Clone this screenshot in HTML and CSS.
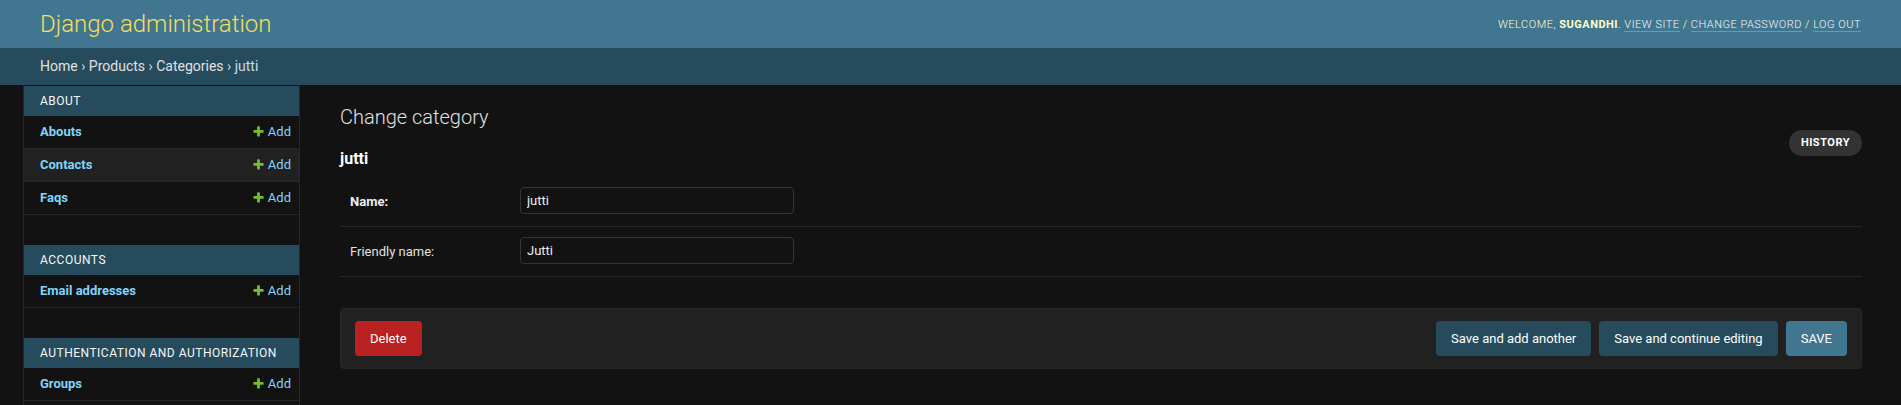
FILE: index.html
```html
<!DOCTYPE html>
<html lang="en">
<head>
<meta charset="utf-8">
<title>Change category | Django site admin</title>
<link rel="stylesheet" href="styles.css">
</head>
<body>
<div class="container">
  <header class="header">
    <div class="branding"><h1 class="site-name"><a href="#">Django administration</a></h1></div>
    <div class="user-tools">Welcome, <strong>sugandhi</strong>. <a href="#">View site</a> / <a href="#">Change password</a> / <a href="#">Log out</a></div>
  </header>
  <nav class="breadcrumbs"><a href="#">Home</a> › <a href="#">Products</a> › <a href="#">Categories</a> › jutti</nav>
  <div class="main">
    <button class="toggle-nav" aria-label="Toggle navigation"></button>
    <nav class="nav-sidebar">
      <div class="module">
        <table>
          <caption>About</caption>
          <tr><th><a href="#">Abouts</a></th><td><a href="#" class="addlink"><svg class="icon-add" viewBox="0 0 1792 1792"><path d="M1600 796v192q0 40-28 68t-68 28h-416v416q0 40-28 68t-68 28h-192q-40 0-68-28t-28-68v-416h-416q-40 0-68-28t-28-68v-192q0-40 28-68t68-28h416v-416q0-40 28-68t68-28h192q40 0 68 28t28 68v416h416q40 0 68 28t28 68z"/></svg>Add</a></td></tr>
          <tr class="hover"><th><a href="#">Contacts</a></th><td><a href="#" class="addlink"><svg class="icon-add" viewBox="0 0 1792 1792"><path d="M1600 796v192q0 40-28 68t-68 28h-416v416q0 40-28 68t-68 28h-192q-40 0-68-28t-28-68v-416h-416q-40 0-68-28t-28-68v-192q0-40 28-68t68-28h416v-416q0-40 28-68t68-28h192q40 0 68 28t28 68v416h416q40 0 68 28t28 68z"/></svg>Add</a></td></tr>
          <tr><th><a href="#">Faqs</a></th><td><a href="#" class="addlink"><svg class="icon-add" viewBox="0 0 1792 1792"><path d="M1600 796v192q0 40-28 68t-68 28h-416v416q0 40-28 68t-68 28h-192q-40 0-68-28t-28-68v-416h-416q-40 0-68-28t-28-68v-192q0-40 28-68t68-28h416v-416q0-40 28-68t68-28h192q40 0 68 28t28 68v416h416q40 0 68 28t28 68z"/></svg>Add</a></td></tr>
        </table>
      </div>
      <div class="module">
        <table>
          <caption>Accounts</caption>
          <tr><th><a href="#">Email addresses</a></th><td><a href="#" class="addlink"><svg class="icon-add" viewBox="0 0 1792 1792"><path d="M1600 796v192q0 40-28 68t-68 28h-416v416q0 40-28 68t-68 28h-192q-40 0-68-28t-28-68v-416h-416q-40 0-68-28t-28-68v-192q0-40 28-68t68-28h416v-416q0-40 28-68t68-28h192q40 0 68 28t28 68v416h416q40 0 68 28t28 68z"/></svg>Add</a></td></tr>
        </table>
      </div>
      <div class="module">
        <table>
          <caption>Authentication and Authorization</caption>
          <tr><th><a href="#">Groups</a></th><td><a href="#" class="addlink"><svg class="icon-add" viewBox="0 0 1792 1792"><path d="M1600 796v192q0 40-28 68t-68 28h-416v416q0 40-28 68t-68 28h-192q-40 0-68-28t-28-68v-416h-416q-40 0-68-28t-28-68v-192q0-40 28-68t68-28h416v-416q0-40 28-68t68-28h192q40 0 68 28t28 68v416h416q40 0 68 28t28 68z"/></svg>Add</a></td></tr>
          <tr><th><a href="#">Users</a></th><td><a href="#" class="addlink"><svg class="icon-add" viewBox="0 0 1792 1792"><path d="M1600 796v192q0 40-28 68t-68 28h-416v416q0 40-28 68t-68 28h-192q-40 0-68-28t-28-68v-416h-416q-40 0-68-28t-28-68v-192q0-40 28-68t68-28h416v-416q0-40 28-68t68-28h192q40 0 68 28t28 68v416h416q40 0 68 28t28 68z"/></svg>Add</a></td></tr>
        </table>
      </div>
    </nav>
    <div class="content">
      <h1 class="page-title">Change category</h1>
      <div class="content-main">
        <ul class="object-tools"><li><a href="#" class="historylink">History</a></li></ul>
        <h2 class="subtitle">jutti</h2>
        <form class="change-form">
          <fieldset class="fieldset">
            <div class="form-row">
              <label class="field-label required" for="id_name">Name:</label>
              <input type="text" id="id_name" class="vTextField" value="jutti">
            </div>
            <div class="form-row">
              <label class="field-label" for="id_friendly_name">Friendly name:</label>
              <input type="text" id="id_friendly_name" class="vTextField" value="Jutti">
            </div>
          </fieldset>
          <div class="submit-row">
            <a href="#" class="deletelink">Delete</a>
            <button type="button" class="button">Save and add another</button>
            <button type="button" class="button">Save and continue editing</button>
            <button type="button" class="button default">Save</button>
          </div>
        </form>
      </div>
    </div>
  </div>
</div>
</body>
</html>
```
FILE: styles.css
```css
* {
  box-sizing: border-box;
}

html {
  overflow: hidden;
}

body {
  margin: 0;
  font-family: Roboto, "Lucida Grande", "DejaVu Sans", Verdana, Arial, sans-serif;
  font-size: 14px;
  color: #eeeeee;
  background: #121212;
}

a {
  text-decoration: none;
  color: #81d4fa;
}

/* Header */
.header {
  display: flex;
  justify-content: space-between;
  align-items: center;
  padding: 10px 40px;
  background: #417690;
  color: #ffffcc;
}

.site-name {
  margin: 0 20px 0 0;
  font-size: 24px;
  font-weight: 300;
  line-height: 28px;
}

.site-name a {
  color: #f5dd5d;
}

.user-tools {
  font-size: 11px;
  font-weight: 300;
  letter-spacing: 0.5px;
  text-transform: uppercase;
}

.user-tools strong {
  font-weight: 700;
}

.user-tools a {
  color: #f7f7f7;
  border-bottom: 1px solid rgba(255, 255, 255, 0.25);
}

/* Breadcrumbs */
.breadcrumbs {
  background: #264b5d;
  padding: 10px 40px;
  color: #c4dce8;
  font-size: 14px;
  line-height: 17px;
}

.breadcrumbs a {
  color: #e0e0e0;
}

/* Main */
.main {
  display: flex;
}

.toggle-nav {
  flex: 0 0 24px;
  border: 0;
  border-right: 1px solid #272727;
  background: #121212;
  padding: 0;
}

.nav-sidebar {
  flex: 0 0 276px;
  border-top: 1px solid transparent;
  border-right: 1px solid #272727;
  background: #121212;
}

.module {
  margin-bottom: 30px;
}

.module table {
  width: 100%;
  border-collapse: collapse;
}

.module caption {
  text-align: left;
  padding: 8px 8px 8px 16px;
  font-size: 12px;
  line-height: 14px;
  font-weight: 400;
  letter-spacing: 0.5px;
  text-transform: uppercase;
  background: #264b5d;
  color: #f7f7f7;
}

.module th,
.module td {
  padding: 8px;
  font-size: 13px;
  line-height: 16px;
  border-bottom: 1px solid #272727;
  vertical-align: top;
  text-align: left;
}

.module th {
  padding-left: 16px;
  width: 100%;
  font-weight: 700;
}

.module td {
  white-space: nowrap;
}

.module tr.hover {
  background: #212121;
}

.addlink {
  font-weight: 400;
}

.icon-add {
  width: 13px;
  height: 13px;
  margin-right: 3px;
  vertical-align: -1.5px;
  fill: #70bf2b;
}

/* Content */
.content {
  flex: 1 1 0%;
  min-width: 0;
  padding: 20px 39px 20px 40px;
}

.page-title {
  margin: 0 0 20px;
  font-size: 20px;
  font-weight: 300;
  color: #e0e0e0;
}

.object-tools {
  float: right;
  margin: -19px 0 0;
  padding: 0;
  list-style: none;
}

.historylink {
  display: block;
  padding: 3px 12px;
  line-height: 20px;
  background: #333333;
  color: #ffffff;
  border-radius: 15px;
  font-size: 11px;
  font-weight: 700;
  text-transform: uppercase;
  letter-spacing: 0.5px;
}

.subtitle {
  margin: 0 0 9px;
  font-size: 16px;
  font-weight: 700;
  color: #ffffff;
}

.fieldset {
  border: 0;
  margin: 0 0 31px;
  padding: 0;
  min-width: 0;
}

.form-row {
  display: flex;
  align-items: flex-start;
  padding: 10px;
  border-bottom: 1px solid #272727;
  font-size: 13px;
}

.field-label {
  flex: 0 0 170px;
  padding: 8px 10px 0 0;
  line-height: 1;
  color: #e0e0e0;
}

.field-label.required {
  font-weight: 700;
  color: #eeeeee;
}

.vTextField {
  width: 274px;
  height: 27px;
  margin: 0 0 2px;
  padding: 5px 6px;
  border: 1px solid #353535;
  border-radius: 4px;
  background: #121212;
  color: #eeeeee;
  font-family: Roboto, "Lucida Grande", "DejaVu Sans", Verdana, Arial, sans-serif;
  font-size: 13px;
}

.submit-row {
  display: flex;
  align-items: center;
  gap: 8px;
  padding: 12px 14px;
  margin: 0 0 20px;
  background: #212121;
  border: 1px solid #272727;
  border-radius: 4px;
}

.deletelink {
  margin-right: auto;
  padding: 10px 15px;
  line-height: 15px;
  font-size: 13px;
  background: #ba2121;
  color: #ffffff;
  border-radius: 4px;
}

.button {
  height: 35px;
  padding: 10px 15px;
  border: 0;
  border-radius: 4px;
  background: #264b5d;
  color: #ffffff;
  font-family: Roboto, "Lucida Grande", "DejaVu Sans", Verdana, Arial, sans-serif;
  font-size: 13px;
  line-height: 15px;
}

.button.default {
  background: #417690;
  text-transform: uppercase;
}
```
